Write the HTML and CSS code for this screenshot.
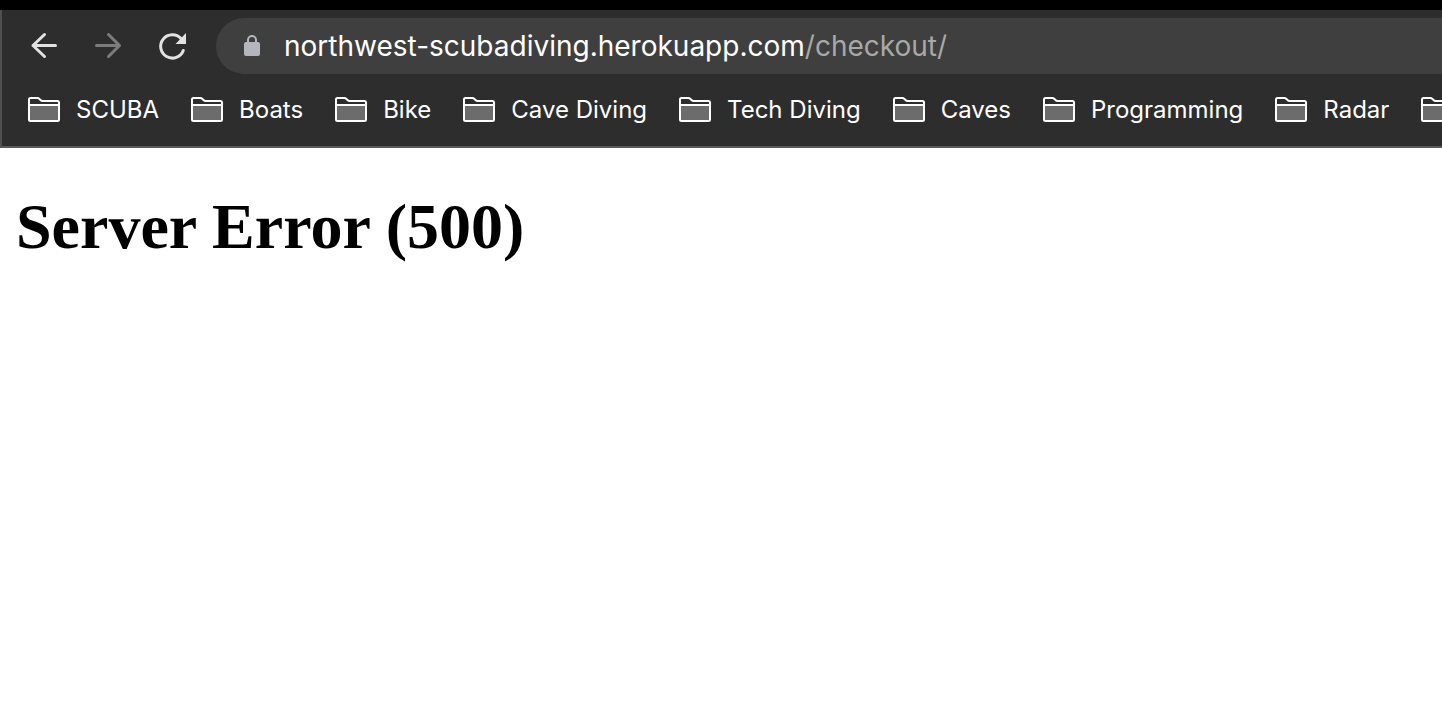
FILE: index.html
```html
<!DOCTYPE html>
<html lang="en">
<head>
<meta charset="utf-8">
<title>Server Error (500)</title>
<link rel="stylesheet" href="styles.css">
</head>
<body>
<svg class="symbols" aria-hidden="true">
  <symbol id="folder" viewBox="0 0 32 26">
    <path class="folder-body" d="M1 8H31V24H1Z"/>
    <path class="folder-line" d="M1 8H31M1 22.500V2.500Q1 1 2.500 1H9.500Q10.500 1 11.200 1.800L12.800 3.300Q13.500 4 14.500 4H29.500Q31 4 31 5.500V22.500Q31 24 29.500 24H2.500Q1 24 1 22.500Z"/>
  </symbol>
</svg>
<div class="window-edge"></div>
<header class="browser">
  <div class="toolbar">
    <button class="nav-button" type="button" aria-label="Back"><svg class="nav-icon" viewBox="0 0 32 32"><path d="M27.500 15.500H5M16.500 4.500L5 15.500L16.500 26.500"/></svg></button>
    <button class="nav-button" type="button" aria-label="Forward" disabled><svg class="nav-icon" viewBox="0 0 32 32"><path d="M4.500 15.500H27.500M16.500 4.500L27.500 15.500L16.500 26.500"/></svg></button>
    <button class="nav-button" type="button" aria-label="Reload"><svg class="nav-icon" viewBox="0 0 32 32"><path d="M27.300 20.500A11.700 11.700 0 1 1 25 8.500"/><path class="reload-tip" d="M30 3V14H19.500Z"/></svg></button>
    <div class="address-bar">
      <svg class="lock" viewBox="0 0 16 22" aria-hidden="true"><rect x="0" y="7" width="16" height="14" rx="2"/><path d="M4 8V5a4 4 0 0 1 8 0V8"/></svg>
      <div class="address" role="textbox" aria-label="Address"><span>northwest-scubadiving.herokuapp.com</span><span class="path">/checkout/</span></div>
    </div>
  </div>
  <nav class="bookmarks" aria-label="Bookmarks">
    <button class="bookmark" type="button"><svg class="folder"><use href="#folder"/></svg>SCUBA</button>
    <button class="bookmark" type="button"><svg class="folder"><use href="#folder"/></svg>Boats</button>
    <button class="bookmark" type="button"><svg class="folder"><use href="#folder"/></svg>Bike</button>
    <button class="bookmark" type="button"><svg class="folder"><use href="#folder"/></svg>Cave Diving</button>
    <button class="bookmark" type="button"><svg class="folder"><use href="#folder"/></svg>Tech Diving</button>
    <button class="bookmark" type="button"><svg class="folder"><use href="#folder"/></svg>Caves</button>
    <button class="bookmark" type="button"><svg class="folder"><use href="#folder"/></svg>Programming</button>
    <button class="bookmark" type="button"><svg class="folder"><use href="#folder"/></svg>Radar</button>
    <button class="bookmark" type="button" aria-label="Folder"><svg class="folder"><use href="#folder"/></svg></button>
  </nav>
</header>
<main class="page">
  <h1 class="title">Server Error (500)</h1>
</main>
</body>
</html>
```
FILE: styles.css
```css
* { box-sizing: border-box; }
body { margin: 0; background: #fff; }
.symbols { position: absolute; width: 0; height: 0; }
.window-edge { height: 10px; background: #000; }
.browser {
  overflow: hidden;
  background: #2d2d2d;
  border-left: 2px solid #505050;
  border-bottom: 2px solid #5a5858;
  font-family: Inter, "Liberation Sans", sans-serif;
  color: #fff;
}
.toolbar { display: flex; align-items: center; padding: 8px 0 0 10px; }
.nav-button {
  display: flex;
  justify-content: center;
  flex: none;
  width: 64px;
  padding: 0;
  border: 0;
  background: none;
  color: #e2e2e2;
}
.nav-button:disabled { color: #7c7c7c; }
.nav-icon { width: 32px; height: 32px; fill: none; stroke: currentColor; stroke-width: 3; stroke-linecap: round; stroke-linejoin: round; }
.reload-tip { fill: currentColor; stroke: none; }
.address-bar {
  display: flex;
  flex: 1;
  align-items: center;
  gap: 24px;
  height: 56px;
  margin-left: 12px;
  padding-left: 28px;
  border-radius: 28px 0 0 28px;
  background: #3f3f3f;
}
.lock { flex: none; width: 16px; height: 22px; fill: #b4b6bf; }
.lock path { fill: none; stroke: #b4b6bf; stroke-width: 2; }
.address { font-size: 28px; line-height: 36px; white-space: nowrap; }
.path { color: #a8a8a8; }
.bookmarks { display: flex; align-items: center; gap: 32px; height: 72px; padding-left: 26px; }
.bookmark {
  display: flex;
  flex: none;
  align-items: center;
  gap: 16px;
  padding: 0;
  border: 0;
  background: none;
  color: #fff;
  font: 24px/32px Inter, "Liberation Sans", sans-serif;
  white-space: nowrap;
}
.folder { width: 32px; height: 26px; }
.folder-body { fill: #6c6c6c; }
.folder-line { fill: none; stroke: #fff; stroke-width: 2; }
.page { padding: 42px 16px; }
.title { margin: 0; font: bold 64px/74px "Liberation Serif", "Times New Roman", serif; color: #000; }
```
